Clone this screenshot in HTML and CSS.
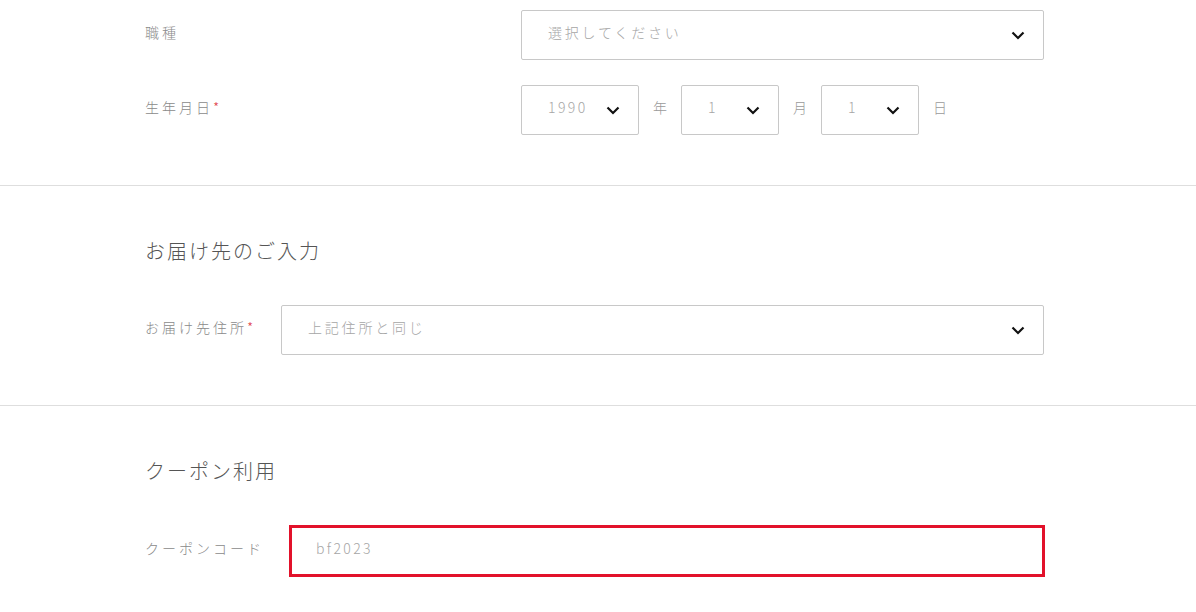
FILE: index.html
```html
<!DOCTYPE html>
<html lang="ja">
<head>
<meta charset="utf-8">
<link rel="stylesheet" href="styles.css">
</head>
<body>
<div class="form">
  <section class="section first">
    <div class="row">
      <div class="label wide">職種</div>
      <div class="select full"><span class="value">選択してください</span><svg class="chev" viewBox="0 0 14 9"><path d="M1.5 1.5 L7 7 L12.5 1.5"/></svg></div>
    </div>
    <div class="row">
      <div class="label wide">生年月日<span class="req">*</span></div>
      <div class="date">
        <div class="select year"><span class="value num">1990</span><svg class="chev" viewBox="0 0 14 9"><path d="M1.5 1.5 L7 7 L12.5 1.5"/></svg></div>
        <span class="unit">年</span>
        <div class="select small"><span class="value num">1</span><svg class="chev" viewBox="0 0 14 9"><path d="M1.5 1.5 L7 7 L12.5 1.5"/></svg></div>
        <span class="unit">月</span>
        <div class="select small"><span class="value num">1</span><svg class="chev" viewBox="0 0 14 9"><path d="M1.5 1.5 L7 7 L12.5 1.5"/></svg></div>
        <span class="unit">日</span>
      </div>
    </div>
  </section>
  <section class="section">
    <h2 class="heading">お届け先のご入力</h2>
    <div class="row">
      <div class="label addr">お届け先住所<span class="req">*</span></div>
      <div class="select full"><span class="value">上記住所と同じ</span><svg class="chev" viewBox="0 0 14 9"><path d="M1.5 1.5 L7 7 L12.5 1.5"/></svg></div>
    </div>
  </section>
  <section class="section last">
    <h2 class="heading">クーポン利用</h2>
    <div class="row">
      <div class="label coupon">クーポンコード</div>
      <div class="input highlighted"><span class="value num">bf2023</span></div>
    </div>
  </section>
</div>
</body>
</html>
```
FILE: styles.css
```css
* { box-sizing: border-box; }
html, body { margin: 0; padding: 0; background: #fff; }
body {
  font-family: "Noto Sans CJK JP", "Noto Sans", sans-serif;
  font-weight: 300;
  color: #888;
  overflow: hidden;
  height: 612px;
}
.section {
  padding: 50px 152px 50px 145px;
  border-bottom: 1px solid #dedede;
}
.section.first { padding-top: 10px; }
.section.last { border-bottom: none; }
.heading {
  margin: 0 0 39px;
  font-size: 20px;
  line-height: 30px;
  font-weight: 300;
  letter-spacing: 2px;
  color: #555;
}
.row {
  display: flex;
  align-items: center;
}
.row + .row { margin-top: 25px; }
.label {
  flex: none;
  font-size: 14px;
  letter-spacing: 3px;
  color: #8a8a8a;
  line-height: 20px;
  margin-top: -7px;
}
.label.wide { width: 376px; }
.label.addr { width: 136px; }
.label.coupon { width: 144px; }
.req { color: #e0414b; letter-spacing: 0; }
.select, .input {
  height: 50px;
  border: 1px solid #c8c8c8;
  border-radius: 2px;
  display: flex;
  align-items: center;
  justify-content: space-between;
  padding: 0 18px 0 26px;
  background: #fff;
}
.select.full { flex: 1; }
.value {
  font-size: 14px;
  letter-spacing: 2.8px;
  color: #a6a6a6;
  line-height: 20px;
  margin-top: -6px;
}
.value.num { letter-spacing: 2.4px; }
.chev {
  width: 14px;
  height: 9px;
  fill: none;
  stroke: #111;
  stroke-width: 2.2;
}
.date {
  display: flex;
  align-items: center;
  gap: 14px;
}
.select.year { width: 118px; }
.select.small { width: 98px; }
.unit {
  font-size: 14px;
  color: #9a9a9a;
  line-height: 20px;
  margin-top: -6px;
}
.input {
  flex: 1;
  justify-content: flex-start;
  padding-left: 24px;
}
.input.highlighted {
  border: 3px solid #e2112a;
  border-radius: 0;
  height: 52px;
  margin-right: -1px;
}
```
